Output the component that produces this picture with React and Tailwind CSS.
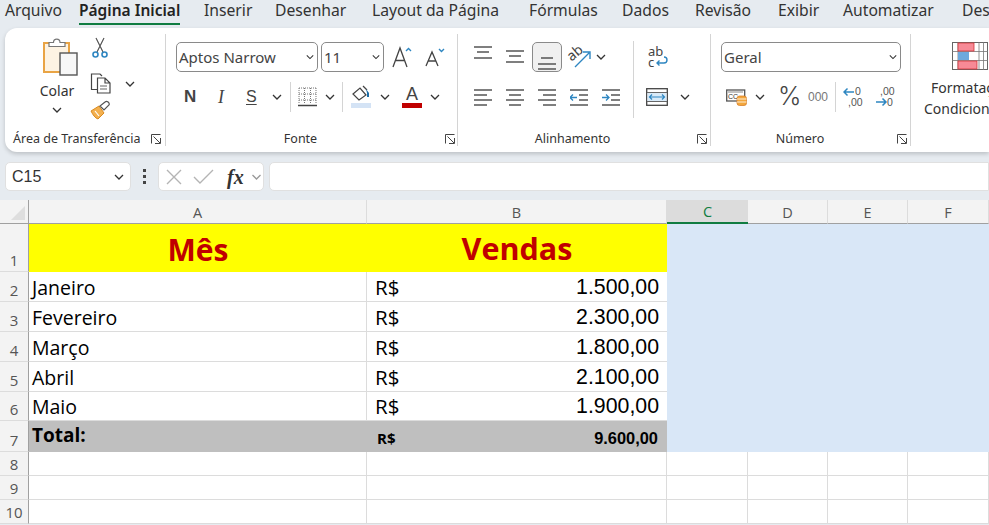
import React from "react";

const UI = { fontFamily: '"Noto Sans", "Open Sans", sans-serif' };
const CELL = { fontFamily: '"Open Sans", "Noto Sans", sans-serif' };
const NUM = { fontFamily: '"Liberation Sans", Arial, sans-serif' };

const Chevron = ({ className = "", color = "#333" }) => (
  <svg width="10" height="6" viewBox="0 0 10 6" className={className}>
    <path d="M1 1 L5 5 L9 1" fill="none" stroke={color} strokeWidth="1.3" />
  </svg>
);

const Launcher = () => (
  <svg width="10" height="10" viewBox="0 0 10 10">
    <path d="M0.5 9.5 V0.5 H9.5 M4 9.5 H9.5 V4 M2.5 2.5 L9 9" fill="none" stroke="#444" strokeWidth="1" />
  </svg>
);

const PasteIcon = () => (
  <svg width="36" height="40" viewBox="0 0 36 40">
    <rect x="1" y="6" width="25" height="29" fill="#fdf3e3" stroke="#e9a445" strokeWidth="2" />
    <path d="M6 9.5 V5.5 H10.5 C10.5 1 17 1 17 5.5 H22 V9.5 Z" fill="#fff" stroke="#777" strokeWidth="1.2" />
    <rect x="17" y="16" width="17" height="22" fill="#f7f7f7" stroke="#555" strokeWidth="1.4" />
  </svg>
);

const Scissors = () => (
  <svg width="16" height="22" viewBox="0 0 16 22">
    <path d="M4 1 L11 15 M12 1 L5 15" fill="none" stroke="#555" strokeWidth="1.2" />
    <circle cx="3.5" cy="17.5" r="2.5" fill="none" stroke="#2e86c1" strokeWidth="1.6" />
    <circle cx="12.5" cy="17.5" r="2.5" fill="none" stroke="#2e86c1" strokeWidth="1.6" />
  </svg>
);

const CopyIcon = () => (
  <svg width="22" height="21" viewBox="0 0 22 21">
    <path d="M10 16.5 H1.5 V1 H10 L12 3" fill="#fff" stroke="#444" strokeWidth="1.2" />
    <path d="M7.5 5 H15 L20 10 V20 H7.5 Z M15 5 V10 H20" fill="#fff" stroke="#444" strokeWidth="1.2" />
    <path d="M10 13 H17 M10 16 H17" stroke="#666" strokeWidth="1.1" />
  </svg>
);

const BrushIcon = () => (
  <svg width="21" height="20" viewBox="0 0 21 20">
    <path d="M1 11 L9 6 L14 13 L8 19 C5 18 3 15 1 11 Z" fill="#f3b04f" stroke="#d98a1f" strokeWidth="1" />
    <path d="M5 11 L9 16" stroke="#fff" strokeWidth="1.2" />
    <path d="M10 6 L14 10 L19 5 C20 3 17 0 15 2 Z" fill="#fff" stroke="#555" strokeWidth="1.2" />
  </svg>
);

const BordersIcon = () => (
  <svg width="19" height="20" viewBox="0 0 19 20">
    <path d="M1 1 H18 M1 7 H18 M1 13 H18 M1 1 V16 M6.5 1 V16 M12.5 1 V16 M18 1 V16" stroke="#777" strokeWidth="1" strokeDasharray="1 1" fill="none" />
    <path d="M0 18.5 H19" stroke="#444" strokeWidth="1.6" />
  </svg>
);

const FillIcon = () => (
  <svg width="20" height="24" viewBox="0 0 20 24">
    <path d="M2 9 L9 3 L15 10 L8 15 Z" fill="#fff" stroke="#444" strokeWidth="1.2" />
    <path d="M12 1 L16 5" stroke="#444" strokeWidth="1.2" />
    <path d="M15 4 L18 8 V12 H16 V8 Z" fill="#1b6ea8" />
    <rect x="0" y="18" width="20" height="5" fill="#d4e3f5" />
  </svg>
);

const GrowFont = ({ small, up }) => (
  <svg width="20" height="22" viewBox="0 0 20 22">
    <path
      d={small ? "M1 20 L7 6 L13 20 M3.2 15 H10.8" : "M1 21 L8 2 L15 21 M3.6 14.5 H12.4"}
      fill="none"
      stroke="#444"
      strokeWidth="1.3"
    />
    <path d={up ? "M14 5 L16.5 2.5 L19 5" : "M14 3 L16.5 5.5 L19 3"} fill="none" stroke="#2e86c1" strokeWidth="1.4" />
  </svg>
);

const Lines = ({ rows, accent }) => (
  <svg width="18" height="17" viewBox="0 0 18 17">
    {rows.map(([x1, x2, y], i) => (
      <path key={i} d={`M${x1} ${y} H${x2}`} stroke="#555" strokeWidth="1.3" />
    ))}
    {accent}
  </svg>
);

const OrientIcon = () => (
  <svg width="24" height="24" viewBox="0 0 24 24" className="overflow-visible">
    <text x="0" y="13" fontSize="14" fill="#444" transform="rotate(-40 7 10)" fontFamily="Noto Sans">ab</text>
    <path d="M7 22 L21 8 M15 7 H22 V14" fill="none" stroke="#2e86c1" strokeWidth="1.4" />
  </svg>
);

const WrapIcon = () => (
  <svg width="20" height="22" viewBox="0 0 20 22" className="overflow-visible">
    <text x="0" y="10" fontSize="13" fill="#444" fontFamily="Noto Sans">ab</text>
    <text x="0" y="21" fontSize="13" fill="#444" fontFamily="Noto Sans">c</text>
    <path d="M9 17 H16 C20 17 20 11 16 11 M11.5 14.5 L9 17 L11.5 19.5" fill="none" stroke="#2e86c1" strokeWidth="1.4" />
  </svg>
);

const MergeIcon = () => (
  <svg width="22" height="18" viewBox="0 0 22 18">
    <rect x="0.7" y="0.7" width="20.6" height="16.6" fill="#fff" stroke="#444" strokeWidth="1.3" />
    <path d="M1 4.5 H21 M1 13.5 H21" stroke="#666" strokeWidth="1" />
    <rect x="1.5" y="5" width="19" height="8" fill="#d8eaf8" />
    <path d="M3.5 9 H18.5 M6 6.5 L3.5 9 L6 11.5 M16 6.5 L18.5 9 L16 11.5" fill="none" stroke="#2e86c1" strokeWidth="1.2" />
  </svg>
);

const Accounting = () => (
  <svg width="21" height="17" viewBox="0 0 21 17">
    <rect x="0.7" y="1" width="18" height="11" fill="#fff" stroke="#555" strokeWidth="1.3" />
    <path d="M2 3 H17" stroke="#888" strokeWidth="1" />
    <text x="2" y="10" fontSize="7" fill="#333" fontFamily="Liberation Sans">CC</text>
    <rect x="11" y="7" width="9.5" height="9.5" rx="2.5" fill="#f3a73c" stroke="#d9822b" strokeWidth="0.8" />
    <path d="M11 10 H20.5 M11 13 H20.5" stroke="#fff" strokeWidth="0.8" />
  </svg>
);

const DecimalIcon = ({ more }) => (
  <svg width="20" height="22" viewBox="0 0 20 22">
    <path
      d={more ? "M1 16 H11 M7.5 12.5 L11 16 L7.5 19.5" : "M1 6 H11 M4.5 2.5 L1 6 L4.5 9.5"}
      fill="none"
      stroke="#2e86c1"
      strokeWidth="1.5"
    />
    <text x={more ? "5" : "12"} y="9" fontSize="10.5" fill="#555" fontFamily="Liberation Sans">{more ? ",00" : "0"}</text>
    <text x={more ? "12" : "5"} y="20" fontSize="10.5" fill="#555" fontFamily="Liberation Sans">{more ? "0" : ",00"}</text>
  </svg>
);

const CondFormat = () => (
  <svg width="36" height="28" viewBox="0 0 36 28">
    <rect x="0.5" y="0.5" width="35" height="27" fill="#fff" stroke="#666" />
    <path d="M6 0 V28 M27 0 V28 M31.5 0 V28 M0 9.5 H36 M0 18.5 H36" stroke="#777" strokeWidth="0.8" fill="none" />
    <rect x="6" y="1" width="16" height="8" fill="#f78a96" stroke="#d13438" strokeWidth="0.8" />
    <rect x="6" y="10" width="11" height="8" fill="#6ea9dd" />
    <rect x="6" y="19" width="19" height="8" fill="#f78a96" stroke="#d13438" strokeWidth="0.8" />
  </svg>
);

const Select = ({ label, className, textClass = "" }) => (
  <div className={`h-[30px] bg-white border border-[#8a8a8a] rounded-[5px] flex items-center justify-between pl-[2px] pr-[3px] ${className}`}>
    <span className={`text-[15px] text-[#444] ${textClass}`}>{label}</span>
    <Chevron className="w-[8px]" />
  </div>
);

const GroupLabel = ({ label, className = "", gap = "ml-[10px]" }) => (
  <div className={`flex items-center h-[14px] text-[12.5px] text-[#333] ${className}`}>
    <span className="flex-1 text-center">{label}</span>
    <div className={gap}><Launcher /></div>
  </div>
);

const Sep = ({ className = "" }) => <div className={`w-px h-[30px] bg-[#d4d4d4] ${className}`} />;

const ClipboardGroup = () => (
  <div className="w-[161px] shrink-0 border-r border-[#d4d4d4] my-[6px] flex flex-col justify-between">
    <div className="flex pl-[38px] pt-[3px]">
      <div className="w-[36px] flex flex-col">
        <PasteIcon />
        <div className="w-[28px] flex flex-col items-center mt-[4px]">
          <span className="text-[14px] leading-[20px] text-[#333]">Colar</span>
          <Chevron className="mt-[6px]" />
        </div>
      </div>
      <div className="flex flex-col ml-[11px]">
        <div className="ml-[2px] h-[31px]"><Scissors /></div>
        <div className="flex items-center h-[31px]">
          <CopyIcon />
          <Chevron className="ml-[13px]" />
        </div>
        <div className="h-[22px] mt-[1px]"><BrushIcon /></div>
      </div>
    </div>
    <GroupLabel label="Área de Transferência" className="pl-[8px] pr-[4px] [&>span]:text-left" gap="ml-[0px]" />
  </div>
);

const FontGroup = () => (
  <div className="w-[292px] shrink-0 border-r border-[#d4d4d4] my-[6px] flex flex-col justify-between">
    <div className="pt-[8px]">
      <div className="flex items-center pl-[10px]">
        <Select label="Aptos Narrow" className="w-[142px]" />
        <Select label="11" className="w-[63px] ml-[3px]" />
        <div className="ml-[8px]"><GrowFont up /></div>
        <div className="ml-[13px]"><GrowFont small /></div>
      </div>
      <div className="flex items-center h-[30px] mt-[10px] pl-[18px] text-[#444]">
        <span className="w-[34px] text-[17px] font-bold" style={NUM}>N</span>
        <span className="w-[28px] text-[18px] italic" style={{ fontFamily: "Liberation Serif" }}>I</span>
        <span className="w-[23px] text-[16px] underline underline-offset-2" style={NUM}>S</span>
        <Chevron className="ml-[3px]" />
        <Sep className="ml-[8px]" />
        <div className="ml-[7px]"><BordersIcon /></div>
        <Chevron className="ml-[8px]" />
        <Sep className="ml-[7px]" />
        <div className="ml-[8px]"><FillIcon /></div>
        <Chevron className="ml-[9px]" />
        <div className="ml-[12px] w-[20px] flex flex-col items-center">
          <span className="text-[18px] leading-[17px] text-[#444]" style={NUM}>A</span>
          <div className="w-[20px] h-[5px] bg-[#c00000]" />
        </div>
        <Chevron className="ml-[8px]" />
      </div>
    </div>
    <GroupLabel label="Fonte" className="pr-[2px]" />
  </div>
);

const AlignGroup = () => (
  <div className="w-[253px] shrink-0 border-r border-[#d4d4d4] my-[6px] flex flex-col justify-between">
    <div className="flex pt-[8px] pl-[16px]">
      <div className="w-[159px] shrink-0">
        <div className="flex items-center h-[30px]">
          <div className="w-[32px] h-[17px] -mt-[5px]"><Lines rows={[[0, 18, 1], [3, 15, 6], [0, 18, 12]]} /></div>
          <div className="w-[26px] h-[17px]"><Lines rows={[[0, 18, 2], [3, 15, 7], [0, 18, 13]]} /></div>
          <div className="w-[30px] h-[30px] border border-[#8a8a8a] rounded-[5px] bg-[#f0f0f0] flex items-end justify-center pb-[1px]">
            <Lines rows={[[3, 15, 5], [0, 18, 11], [0, 18, 16]]} />
          </div>
          <div className="ml-[6px]"><OrientIcon /></div>
          <Chevron className="ml-[4px]" />
        </div>
        <div className="flex items-center h-[30px] mt-[10px]">
          <div className="w-[32px]"><Lines rows={[[0, 18, 1], [0, 13, 6], [0, 18, 11], [0, 13, 16]]} /></div>
          <div className="w-[32px]"><Lines rows={[[0, 18, 1], [3, 15, 6], [0, 18, 11], [3, 15, 16]]} /></div>
          <div className="w-[32px]"><Lines rows={[[0, 18, 1], [5, 18, 6], [0, 18, 11], [5, 18, 16]]} /></div>
          <div className="w-[32px]">
            <Lines
              rows={[[0, 18, 1], [9, 18, 6], [9, 18, 11], [0, 18, 16]]}
              accent={<path d="M0 8.5 H7 M3 5.5 L0 8.5 L3 11.5" fill="none" stroke="#2e86c1" strokeWidth="1.3" />}
            />
          </div>
          <div className="w-[30px]">
            <Lines
              rows={[[0, 18, 1], [9, 18, 6], [9, 18, 11], [0, 18, 16]]}
              accent={<path d="M0 8.5 H7 M4 5.5 L7 8.5 L4 11.5" fill="none" stroke="#2e86c1" strokeWidth="1.3" />}
            />
          </div>
        </div>
      </div>
      <div className="w-px h-[77px] bg-[#d4d4d4] -mt-[1px]" />
      <div className="flex flex-col ml-[12px]">
        <div className="ml-[2px] h-[30px] flex items-center"><WrapIcon /></div>
        <div className="flex items-center h-[30px] mt-[10px]">
          <MergeIcon />
          <Chevron className="ml-[12px]" />
        </div>
      </div>
    </div>
    <GroupLabel label="Alinhamento" className="pr-[3px]" />
  </div>
);

const NumberGroup = () => (
  <div className="w-[200px] shrink-0 border-r border-[#d4d4d4] my-[6px] flex flex-col justify-between">
    <div className="pt-[8px] pl-[10px]">
      <Select label="Geral" className="w-[180px]" />
      <div className="flex items-center h-[30px] mt-[10px] pl-[5px]">
        <Accounting />
        <Chevron className="ml-[8px]" />
        <span className="ml-[13px] w-[22px] text-[25px] font-light text-[#444]" style={{ fontFamily: "Inter" }}>%</span>
        <span className="ml-[8px] text-[12px] text-[#777]" style={NUM}>000</span>
        <Sep className="ml-[7px]" />
        <div className="ml-[7px]"><DecimalIcon /></div>
        <div className="ml-[12px]"><DecimalIcon more /></div>
      </div>
    </div>
    <GroupLabel label="Número" className="pr-[3px]" gap="ml-[8px]" />
  </div>
);

const Ribbon = () => (
  <div className="ml-[5px] h-[124px] bg-white rounded-l-[12px] shadow-[0_2px_4px_rgba(0,0,0,0.18)] flex overflow-hidden">
    <ClipboardGroup />
    <FontGroup />
    <AlignGroup />
    <NumberGroup />
    <div className="flex flex-col pt-[14px] pl-[13px] whitespace-nowrap text-[14px] leading-[21px] text-[#333]">
      <div className="ml-[28px]"><CondFormat /></div>
      <span className="mt-[7px] ml-[7px]">Formatação</span>
      <span>Condicional</span>
    </div>
  </div>
);

const FormulaBar = () => (
  <div className="flex items-center h-[29px] mt-[10px] ml-[5px]">
    <div className="w-[126px] h-[29px] bg-white rounded-[5px] border border-[#e0e0e0] flex items-center justify-between pl-[6px] pr-[6px]">
      <span className="text-[16px] text-[#333]" style={NUM}>C15</span>
      <Chevron />
    </div>
    <div className="w-[27px] flex flex-col items-center gap-[3px]">
      <div className="w-[3px] h-[3px] bg-[#444]" />
      <div className="w-[3px] h-[3px] bg-[#444]" />
      <div className="w-[3px] h-[3px] bg-[#444]" />
    </div>
    <div className="w-[106px] h-[29px] bg-white rounded-[5px] border border-[#e0e0e0] flex items-center pl-[7px]">
      <svg width="16" height="16" viewBox="0 0 16 16">
        <path d="M1 1 L15 15 M15 1 L1 15" stroke="#b4b4b4" strokeWidth="1.4" />
      </svg>
      <svg width="21" height="16" viewBox="0 0 21 16" className="ml-[11px]">
        <path d="M1 8 L7 14 L20 1" fill="none" stroke="#b4b4b4" strokeWidth="1.4" />
      </svg>
      <span className="ml-[13px] text-[20px] italic font-bold text-[#333] leading-none" style={{ fontFamily: "Liberation Serif" }}>fx</span>
      <Chevron className="ml-[6px] w-[13px]" color="#999" />
    </div>
    <div className="flex-1 h-[29px] ml-[5px] bg-white rounded-l-[5px] border border-[#e0e0e0]" />
  </div>
);

const months = [
  ["Janeiro", "1.500,00", "h-[30px]"],
  ["Fevereiro", "2.300,00", "h-[30px]"],
  ["Março", "1.800,00", "h-[30px]"],
  ["Abril", "2.100,00", "h-[30px]"],
  ["Maio", "1.900,00", "h-[29px]"],
];

const RowHead = ({ n, className = "h-[30px]" }) => (
  <div className={`${className} bg-[#f3f3f3] border-r border-b border-r-[#a0a0a0] border-b-[#dcdcdc] flex items-end justify-center text-[15px] leading-[22px] text-[#555]`}>{n}</div>
);

const ColHead = ({ c, active }) => (
  <div
    className={`h-[24px] pt-[2px] flex items-center justify-center text-[14.5px] border-b ${
      active
        ? "bg-[#dcdcdc] text-[#107c41] border-b-2 border-b-[#107c41]"
        : "bg-[#f3f3f3] text-[#555] border-r border-r-[#dcdcdc] border-b-[#a0a0a0]"
    }`}
  >
    {c}
  </div>
);

const Blue = () => <div className="bg-[#d9e7f7]" />;

const Empty = () => <div className="border-b border-r border-[#dcdcdc]" />;

const Sheet = () => (
  <div
    className="mt-[9px] grid grid-cols-[29px_338px_300px_81px_80px_80px_81px_1fr] grid-rows-[24px_48px_30px_30px_30px_30px_29px_31px_24px_24px_24px] bg-white"
    style={CELL}
  >
    <div className="bg-[#f3f3f3] border-r border-b border-[#a0a0a0] flex items-end justify-end p-[3px]">
      <svg width="14" height="14" viewBox="0 0 14 14">
        <path d="M14 0 V14 H0 Z" fill="#dedede" />
      </svg>
    </div>
    <ColHead c="A" />
    <ColHead c="B" />
    <ColHead c="C" active />
    <ColHead c="D" />
    <ColHead c="E" />
    <ColHead c="F" />
    <div className="bg-[#f3f3f3] border-b border-b-[#a0a0a0]" />

    <RowHead n="1" className="h-[48px]" />
    <div className="bg-[#ffff00] pt-[2px] flex items-center justify-center text-[30px] font-bold text-[#c00000]">Mês</div>
    <div className="bg-[#ffff00] pt-[2px] flex items-center justify-center text-[30.5px] font-bold text-[#c00000]">Vendas</div>
    <Blue /><Blue /><Blue /><Blue /><div className="border-b border-[#dcdcdc]" />

    {months.map(([m, v, h], i) => (
      <React.Fragment key={m}>
        <RowHead n={i + 2} className={h} />
        <div className="border-r border-b border-[#dcdcdc] pl-[3px] flex items-end text-[19.5px] leading-[27px] text-black">{m}</div>
        <div className="border-b border-[#dcdcdc] pl-[8px] pr-[8px] flex items-end justify-between text-[20.5px] leading-[27px] text-black">
          <span>R$</span>
          <span className="text-[21.3px]" style={NUM}>{v}</span>
        </div>
        <Blue /><Blue /><Blue /><Blue /><div className="border-b border-[#dcdcdc]" />
      </React.Fragment>
    ))}

    <RowHead n="7" className="h-[31px]" />
    <div className="bg-[#bfbfbf] pl-[3px] flex items-start text-[19px] leading-[31px] font-bold text-black">
      <span className="-mt-[1px]">Total:</span>
    </div>
    <div className="bg-[#bfbfbf] pl-[10px] pr-[9px] flex items-end justify-between pb-[1px] text-[15px] leading-[26px] font-bold text-black">
      <span>R$</span>
      <span className="text-[16.4px]" style={NUM}>9.600,00</span>
    </div>
    <Blue /><Blue /><Blue /><Blue /><div className="border-b border-[#dcdcdc]" />

    {[8, 9, 10].map((n) => (
      <React.Fragment key={n}>
        <RowHead n={n} className="h-[24px]" />
        <Empty /><Empty /><Empty /><Empty /><Empty /><Empty /><Empty />
      </React.Fragment>
    ))}
  </div>
);

const tabs = [
  ["Arquivo", "w-[74px]"],
  ["Página Inicial", "w-[125px]"],
  ["Inserir", "w-[71px]"],
  ["Desenhar", "w-[97px]"],
  ["Layout da Página", "w-[157px]"],
  ["Fórmulas", "w-[93px]"],
  ["Dados", "w-[73px]"],
  ["Revisão", "w-[83px]"],
  ["Exibir", "w-[65px]"],
  ["Automatizar", "w-[119px]"],
  ["Desenvolvedor", "w-[120px]"],
];

export default function App() {
  return (
    <div className="w-[989px] h-[525px] overflow-hidden bg-[#e6ebf0]" style={UI}>
      <div className="flex h-[28px] pl-[5px] whitespace-nowrap overflow-hidden">
        {tabs.map(([t, w]) => (
          <div key={t} className={`${w} shrink-0 text-[15.7px] leading-[21px] text-[#333]`}>
            {t === "Página Inicial" ? (
              <span className="inline-block font-semibold text-[15.5px] text-[#222] border-b-[2px] border-[#107c41] pb-[2px]">{t}</span>
            ) : (
              t
            )}
          </div>
        ))}
      </div>
      <Ribbon />
      <FormulaBar />
      <Sheet />
    </div>
  );
}
